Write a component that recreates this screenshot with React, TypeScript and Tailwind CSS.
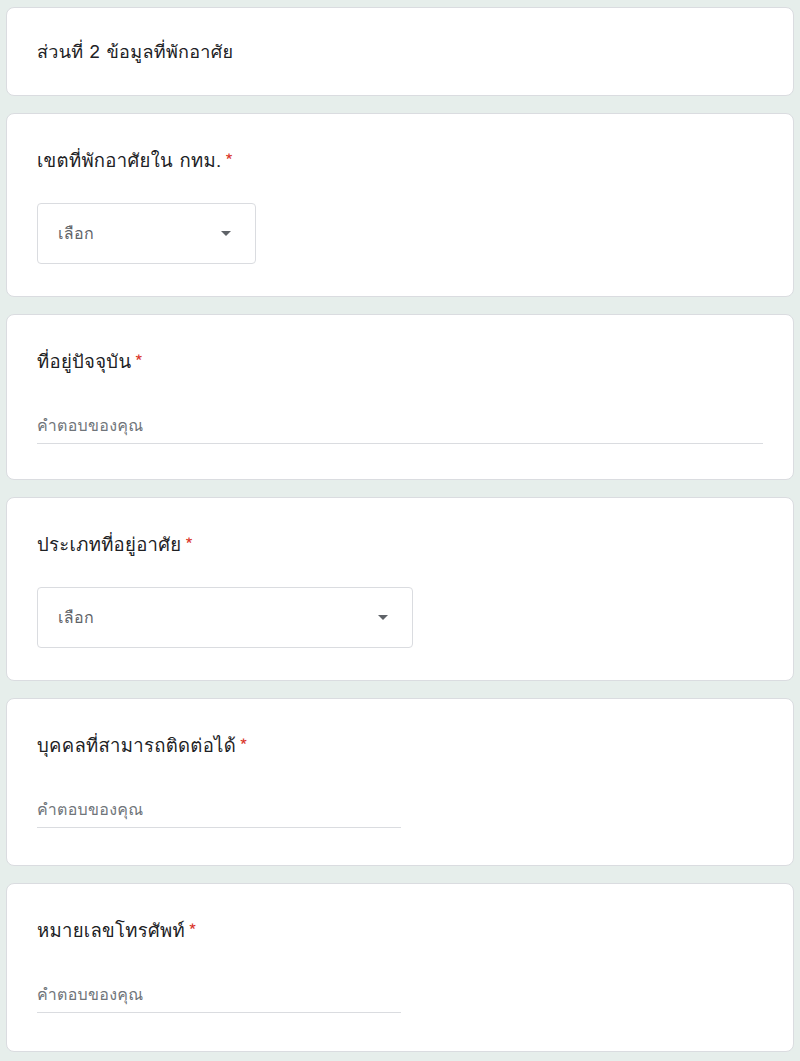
import React from 'react';

const font = { fontFamily: 'Loma, Tahoma, "Noto Sans Thai", "Leelawadee UI", "Noto Sans", sans-serif' };

function Label({ text }: { text: string }) {
  return (
    <div className="text-[18.5px] leading-6 tracking-[0.3px] text-[#202124]">
      {text}
      <span className="text-[#d93025] ml-1">*</span>
    </div>
  );
}

function Dropdown({ width }: { width: string }) {
  return (
    <div className={`${width} h-[61px] mt-[30px] flex items-center justify-between border border-[#dadce0] rounded-[4px] pl-5 pr-6`}>
      <span className="text-[16px] tracking-[0.4px] text-[#5f6368]">เลือก</span>
      <svg width="10" height="5" viewBox="0 0 10 5">
        <path d="M0 0 L10 0 L5 5 Z" fill="#5f6368" />
      </svg>
    </div>
  );
}

function TextInput({ width }: { width: string }) {
  return (
    <div className={`${width} mt-[40px] border-b border-[#dadce0] pb-[5px]`}>
      <span className="text-[16px] tracking-[0.3px] text-[#70757a]">คำตอบของคุณ</span>
    </div>
  );
}

function Card({ children, className }: { children: React.ReactNode; className: string }) {
  return (
    <div className={`bg-white rounded-[8px] border border-[#dadce0] px-[30px] ${className}`}>
      {children}
    </div>
  );
}

export default function App() {
  return (
    <div className="min-h-[1061px] bg-[#e6eeeb] px-[6px] pt-[7px] flex flex-col gap-[17px]" style={font}>
      <Card className="h-[89px] flex items-center">
        <div className="text-[18px] tracking-[0.3px] text-[#202124]">ส่วนที่ 2 ข้อมูลที่พักอาศัย</div>
      </Card>

      <Card className="h-[184px] pt-[35px]">
        <Label text="เขตที่พักอาศัยใน กทม." />
        <Dropdown width="w-[219px]" />
      </Card>

      <Card className="h-[166px] pt-[35px]">
        <Label text="ที่อยู่ปัจจุบัน" />
        <TextInput width="w-full" />
      </Card>

      <Card className="h-[184px] pt-[35px]">
        <Label text="ประเภทที่อยู่อาศัย" />
        <Dropdown width="w-[376px]" />
      </Card>

      <Card className="h-[168px] pt-[35px]">
        <Label text="บุคคลที่สามารถติดต่อได้" />
        <TextInput width="w-[364px]" />
      </Card>

      <Card className="h-[169px] pt-[35px]">
        <Label text="หมายเลขโทรศัพท์" />
        <TextInput width="w-[364px]" />
      </Card>
    </div>
  );
}
